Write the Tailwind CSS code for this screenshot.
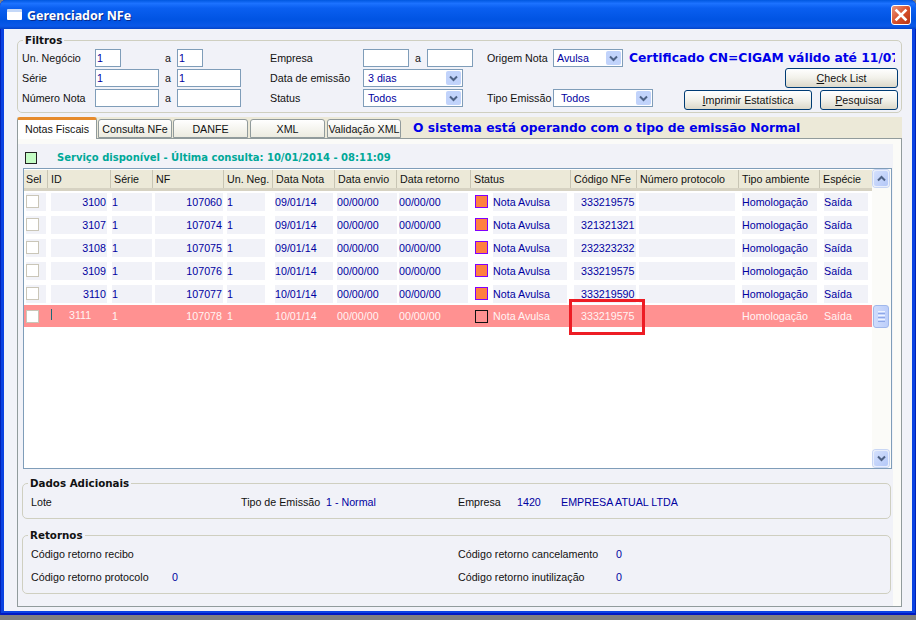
<!DOCTYPE html>
<html lang="en">
<head>
<meta charset="UTF-8">
<title>Gerenciador NFe</title>
<script src="https://cdn.jsdelivr.net/npm/@tailwindcss/browser@4"></script>
</head>
<body class="bg-[#808080] font-['Liberation_Sans',sans-serif] text-[10.7px] leading-[14px] text-[#111]">
<div class="relative h-[620px] w-[916px] overflow-hidden">
  <!-- window -->
  <div class="flex h-[615px] w-[916px] flex-col rounded-t-[6px] bg-[#0a42e2] px-[4px] pb-[4px] shadow-[inset_1px_0_0_#0022b8,inset_-1px_0_0_#0022b8,inset_0_-2px_0_#0018c4]">
    <!-- title bar -->
    <div class="-mx-[4px] flex h-[29px] shrink-0 items-center rounded-t-[6px] bg-[linear-gradient(#0058e0,#1c72ff_12%,#0a5ff0_28%,#0053e2_70%,#0a58e8_90%,#0343c8)] pl-[7px] pr-[5px]">
      <div class="h-[11px] w-[15px] rounded-[1px] border-t-[3px] border-[#c4d8f8] bg-white"></div>
      <span class="ml-[5px] pt-[2px] font-['Noto_Sans',sans-serif] text-[12.5px] font-bold text-white [text-shadow:1px_1px_0_#0a2a8a]">Gerenciador NFe</span>
      <div class="ml-auto flex h-[20px] w-[20px] items-center justify-center rounded-[3px] border border-white bg-gradient-to-br from-[#e8957c] via-[#d8512c] to-[#b93412]">
        <svg width="14" height="14" viewBox="0 0 14 14"><path d="M2.5 2.5L11.5 11.5M11.5 2.5L2.5 11.5" stroke="#fff" stroke-width="2.6" stroke-linecap="square"/></svg>
      </div>
    </div>
    <!-- client area -->
    <div class="flex min-h-0 flex-1 flex-col bg-[#f1f2f8] pl-[13px] pr-[10px] pt-[4px]">
      <!-- Filtros -->
      <fieldset class="h-[80px] shrink-0 rounded-[5px] border border-[#cfcfc0]">
        <legend class="ml-[5px] px-[2px] font-['DejaVu_Sans',sans-serif] text-[10.3px] font-bold leading-[14px]">Filtros</legend>
        <div class="grid grid-cols-[73px_64px_18px_64px_29px_93px_110px_14px_66px_1fr] grid-rows-[18px_18px_18px] items-center gap-y-[2px] whitespace-nowrap pl-[4px] pr-[3px] pt-[2px]">
          <span>Un. Negócio</span>
          <input value="1" class="h-[18px] w-[26px] border border-[#7f9db9] bg-white px-[1px] text-[#0000a0] outline-none">
          <span class="pl-[6px]">a</span>
          <input value="1" class="h-[18px] w-[26px] border border-[#7f9db9] bg-white px-[1px] text-[#0000a0] outline-none">
          <span></span>
          <span>Empresa</span>
          <div class="flex items-center">
            <input class="h-[18px] w-[46px] border border-[#7f9db9] bg-white outline-none">
            <span class="w-[18px] pl-[6px]">a</span>
            <input class="h-[18px] w-[46px] border border-[#7f9db9] bg-white outline-none">
          </div>
          <span></span>
          <span>Origem Nota</span>
          <div class="flex items-center">
            <div class="flex h-[18px] w-[70px] items-center justify-between border border-[#7f9db9] bg-white pl-[3px] pr-[1px] text-[#0000a0]">Avulsa
              <span class="flex h-[14px] w-[15px] items-center justify-center rounded-[2px] bg-[#c1d3fb]"><svg width="9" height="7" viewBox="0 0 9 7"><path d="M1 1.5L4.5 5L8 1.5" fill="none" stroke="#4d6185" stroke-width="2"/></svg></span>
            </div>
            <span class="ml-[6px] w-[266px] overflow-hidden font-['DejaVu_Sans',sans-serif] text-[12.3px] font-bold text-[#0000e8]">Certificado CN=CIGAM válido até 11/07</span>
          </div>

          <span>Série</span>
          <input value="1" class="h-[18px] w-[64px] border border-[#7f9db9] bg-white px-[1px] text-[#0000a0] outline-none">
          <span class="pl-[6px]">a</span>
          <input value="1" class="h-[18px] w-[64px] border border-[#7f9db9] bg-white px-[1px] text-[#0000a0] outline-none">
          <span></span>
          <span>Data de emissão</span>
          <div class="flex h-[18px] w-[100px] items-center justify-between border border-[#7f9db9] bg-white pl-[4px] pr-[1px] text-[#0000a0]">3 dias
            <span class="flex h-[14px] w-[15px] items-center justify-center rounded-[2px] bg-[#c1d3fb]"><svg width="9" height="7" viewBox="0 0 9 7"><path d="M1 1.5L4.5 5L8 1.5" fill="none" stroke="#4d6185" stroke-width="2"/></svg></span>
          </div>
          <span></span>
          <span></span>
          <div class="flex h-[18px] items-start justify-end">
            <button class="-mt-[1px] h-[20px] w-[113px] rounded-[3px] border border-[#003c74] bg-gradient-to-b from-white via-[#f2f1ea] to-[#dcd8ca]"><u>C</u>heck List</button>
          </div>

          <span>Número Nota</span>
          <input class="h-[18px] w-[64px] border border-[#7f9db9] bg-white outline-none">
          <span class="pl-[6px]">a</span>
          <input class="h-[18px] w-[64px] border border-[#7f9db9] bg-white outline-none">
          <span></span>
          <span>Status</span>
          <div class="flex h-[18px] w-[100px] items-center justify-between border border-[#7f9db9] bg-white pl-[4px] pr-[1px] text-[#0000a0]">Todos
            <span class="flex h-[14px] w-[15px] items-center justify-center rounded-[2px] bg-[#c1d3fb]"><svg width="9" height="7" viewBox="0 0 9 7"><path d="M1 1.5L4.5 5L8 1.5" fill="none" stroke="#4d6185" stroke-width="2"/></svg></span>
          </div>
          <span></span>
          <span>Tipo Emissão</span>
          <div class="flex h-[18px] items-start">
            <div class="flex h-[18px] w-[100px] items-center justify-between border border-[#7f9db9] bg-white pl-[7px] pr-[1px] text-[#0000a0]">Todos
              <span class="flex h-[14px] w-[15px] items-center justify-center rounded-[2px] bg-[#c1d3fb]"><svg width="9" height="7" viewBox="0 0 9 7"><path d="M1 1.5L4.5 5L8 1.5" fill="none" stroke="#4d6185" stroke-width="2"/></svg></span>
            </div>
            <button class="ml-[31px] mt-[1px] h-[20px] w-[128px] rounded-[3px] border border-[#003c74] bg-gradient-to-b from-white via-[#f2f1ea] to-[#dcd8ca]"><u>I</u>mprimir Estatística</button>
            <button class="ml-[8px] mt-[1px] h-[20px] w-[78px] rounded-[3px] border border-[#003c74] bg-gradient-to-b from-white via-[#f2f1ea] to-[#dcd8ca]"><u>P</u>esquisar</button>
          </div>
        </div>
      </fieldset>

      <!-- tabs -->
      <div class="mt-[4px] flex h-[21px] w-[885px] shrink-0 items-end gap-[1px] whitespace-nowrap bg-[#ece9d8]">
        <div class="z-10 -mb-[1px] flex h-[22px] w-[80px] items-center justify-center rounded-t-[3px] border-x border-t-[3px] border-x-[#919b9c] border-t-[#e68b2c] bg-white pb-[2px]">Notas Fiscais</div>
        <div class="flex h-[19px] w-[74px] items-center justify-center rounded-t-[3px] border border-[#919b9c] bg-gradient-to-b from-white to-[#ecebe0]">Consulta NFe</div>
        <div class="flex h-[19px] w-[75px] items-center justify-center rounded-t-[3px] border border-[#919b9c] bg-gradient-to-b from-white to-[#ecebe0]">DANFE</div>
        <div class="ml-[1px] flex h-[19px] w-[75px] items-center justify-center rounded-t-[3px] border border-[#919b9c] bg-gradient-to-b from-white to-[#ecebe0]">XML</div>
        <div class="ml-[1px] flex h-[19px] w-[74px] items-center justify-center rounded-t-[3px] border border-[#919b9c] bg-gradient-to-b from-white to-[#ecebe0]">Validação XML</div>
        <span class="ml-[11px] self-center font-['DejaVu_Sans',sans-serif] text-[12.3px] font-bold text-[#0000e8]">O sistema está operando com o tipo de emissão Normal</span>
      </div>

      <!-- tab panel -->
      <div class="flex h-[469px] w-[885px] shrink-0 flex-col border border-[#919b9c] bg-[#fbfbf8] pr-[8px] pt-[5px]">
        <div class="flex min-h-0 flex-1 flex-col bg-[#f1f2f8]">
          <div class="flex h-[24px] shrink-0 items-start pl-[7px] pt-[8px]">
            <div class="h-[12px] w-[12px] border border-[#222] bg-[#c4fcc4]"></div>
            <span class="ml-[20px] font-['DejaVu_Sans',sans-serif] text-[10px] font-bold leading-[12px] text-[#00a898]">Serviço disponível - Última consulta: 10/01/2014 - 08:11:09</span>
          </div>

          <!-- grid -->
          <div class="ml-[5px] flex h-[301px] w-[869px] shrink-0 border border-[#7f9db9] bg-white">
            <div class="w-[848px] shrink-0 pt-[1px]">
              <div class="flex h-[21px] whitespace-nowrap border-b-[3px] border-[#d6d2c2] bg-[#ece9d8]">
                <div class="w-[24px] border-r border-[#c8c5b4] pl-[2px] pt-[2px]">Sel</div>
                <div class="w-[63px] border-r border-[#c8c5b4] pl-[3px] pt-[2px]">ID</div>
                <div class="w-[42px] border-r border-[#c8c5b4] pl-[3px] pt-[2px]">Série</div>
                <div class="w-[71px] border-r border-[#c8c5b4] pl-[3px] pt-[2px]">NF</div>
                <div class="w-[49px] border-r border-[#c8c5b4] pl-[3px] pt-[2px]">Un. Neg.</div>
                <div class="w-[62px] border-r border-[#c8c5b4] pl-[3px] pt-[2px]">Data Nota</div>
                <div class="w-[62px] border-r border-[#c8c5b4] pl-[3px] pt-[2px]">Data envio</div>
                <div class="w-[74px] border-r border-[#c8c5b4] pl-[3px] pt-[2px]">Data retorno</div>
                <div class="w-[100px] border-r border-[#c8c5b4] pl-[3px] pt-[2px]">Status</div>
                <div class="w-[66px] border-r border-[#c8c5b4] pl-[3px] pt-[2px]">Código NFe</div>
                <div class="w-[102px] border-r border-[#c8c5b4] pl-[3px] pt-[2px]">Número protocolo</div>
                <div class="w-[81px] border-r border-[#c8c5b4] pl-[3px] pt-[2px]">Tipo ambiente</div>
                <div class="w-[51px] pl-[3px] pt-[2px]">Espécie</div>
              </div>

              <div class="pt-[2px] text-[#0000a0]">
                <div class="mb-[5px] flex h-[18px] leading-[18px]">
                  <div class="ml-[2px] h-[18px] w-[20px] bg-[#f1f2f8]"><div class="mt-[2px] h-[13px] w-[13px] border border-[#cac6b8] bg-white"></div></div>
                  <div class="ml-[5px] w-[56px] bg-[#f1f2f8] pr-[1px] text-right">3100</div>
                  <div class="ml-[5px] w-[40px] bg-[#f1f2f8]">1</div>
                  <div class="ml-[3px] w-[68px] bg-[#f1f2f8] pr-[1px] text-right">107060</div>
                  <div class="ml-[4px] w-[38px] bg-[#f1f2f8]">1</div>
                  <div class="ml-[10px] w-[58px] bg-[#f1f2f8]">09/01/14</div>
                  <div class="ml-[4px] w-[60px] bg-[#f1f2f8]">00/00/00</div>
                  <div class="ml-[2px] w-[69px] bg-[#f1f2f8]">00/00/00</div>
                  <div class="ml-[7px] mt-[2px] h-[13px] w-[13px] border border-[#8000ff] bg-[#ff8040]"></div>
                  <div class="ml-[5px] w-[74px] bg-[#f1f2f8]">Nota Avulsa</div>
                  <div class="ml-[7px] w-[62px] bg-[#f1f2f8] pl-[7px]">333219575</div>
                  <div class="ml-[3px] w-[96px] bg-[#f1f2f8]"></div>
                  <div class="ml-[7px] w-[75px] bg-[#f1f2f8]">Homologação</div>
                  <div class="ml-[7px] w-[44px] bg-[#f1f2f8]">Saída</div>
                </div>
                <div class="mb-[5px] flex h-[18px] leading-[18px]">
                  <div class="ml-[2px] h-[18px] w-[20px] bg-[#f1f2f8]"><div class="mt-[2px] h-[13px] w-[13px] border border-[#cac6b8] bg-white"></div></div>
                  <div class="ml-[5px] w-[56px] bg-[#f1f2f8] pr-[1px] text-right">3107</div>
                  <div class="ml-[5px] w-[40px] bg-[#f1f2f8]">1</div>
                  <div class="ml-[3px] w-[68px] bg-[#f1f2f8] pr-[1px] text-right">107074</div>
                  <div class="ml-[4px] w-[38px] bg-[#f1f2f8]">1</div>
                  <div class="ml-[10px] w-[58px] bg-[#f1f2f8]">09/01/14</div>
                  <div class="ml-[4px] w-[60px] bg-[#f1f2f8]">00/00/00</div>
                  <div class="ml-[2px] w-[69px] bg-[#f1f2f8]">00/00/00</div>
                  <div class="ml-[7px] mt-[2px] h-[13px] w-[13px] border border-[#8000ff] bg-[#ff8040]"></div>
                  <div class="ml-[5px] w-[74px] bg-[#f1f2f8]">Nota Avulsa</div>
                  <div class="ml-[7px] w-[62px] bg-[#f1f2f8] pl-[7px]">321321321</div>
                  <div class="ml-[3px] w-[96px] bg-[#f1f2f8]"></div>
                  <div class="ml-[7px] w-[75px] bg-[#f1f2f8]">Homologação</div>
                  <div class="ml-[7px] w-[44px] bg-[#f1f2f8]">Saída</div>
                </div>
                <div class="mb-[5px] flex h-[18px] leading-[18px]">
                  <div class="ml-[2px] h-[18px] w-[20px] bg-[#f1f2f8]"><div class="mt-[2px] h-[13px] w-[13px] border border-[#cac6b8] bg-white"></div></div>
                  <div class="ml-[5px] w-[56px] bg-[#f1f2f8] pr-[1px] text-right">3108</div>
                  <div class="ml-[5px] w-[40px] bg-[#f1f2f8]">1</div>
                  <div class="ml-[3px] w-[68px] bg-[#f1f2f8] pr-[1px] text-right">107075</div>
                  <div class="ml-[4px] w-[38px] bg-[#f1f2f8]">1</div>
                  <div class="ml-[10px] w-[58px] bg-[#f1f2f8]">09/01/14</div>
                  <div class="ml-[4px] w-[60px] bg-[#f1f2f8]">00/00/00</div>
                  <div class="ml-[2px] w-[69px] bg-[#f1f2f8]">00/00/00</div>
                  <div class="ml-[7px] mt-[2px] h-[13px] w-[13px] border border-[#8000ff] bg-[#ff8040]"></div>
                  <div class="ml-[5px] w-[74px] bg-[#f1f2f8]">Nota Avulsa</div>
                  <div class="ml-[7px] w-[62px] bg-[#f1f2f8] pl-[7px]">232323232</div>
                  <div class="ml-[3px] w-[96px] bg-[#f1f2f8]"></div>
                  <div class="ml-[7px] w-[75px] bg-[#f1f2f8]">Homologação</div>
                  <div class="ml-[7px] w-[44px] bg-[#f1f2f8]">Saída</div>
                </div>
                <div class="mb-[5px] flex h-[18px] leading-[18px]">
                  <div class="ml-[2px] h-[18px] w-[20px] bg-[#f1f2f8]"><div class="mt-[2px] h-[13px] w-[13px] border border-[#cac6b8] bg-white"></div></div>
                  <div class="ml-[5px] w-[56px] bg-[#f1f2f8] pr-[1px] text-right">3109</div>
                  <div class="ml-[5px] w-[40px] bg-[#f1f2f8]">1</div>
                  <div class="ml-[3px] w-[68px] bg-[#f1f2f8] pr-[1px] text-right">107076</div>
                  <div class="ml-[4px] w-[38px] bg-[#f1f2f8]">1</div>
                  <div class="ml-[10px] w-[58px] bg-[#f1f2f8]">10/01/14</div>
                  <div class="ml-[4px] w-[60px] bg-[#f1f2f8]">00/00/00</div>
                  <div class="ml-[2px] w-[69px] bg-[#f1f2f8]">00/00/00</div>
                  <div class="ml-[7px] mt-[2px] h-[13px] w-[13px] border border-[#8000ff] bg-[#ff8040]"></div>
                  <div class="ml-[5px] w-[74px] bg-[#f1f2f8]">Nota Avulsa</div>
                  <div class="ml-[7px] w-[62px] bg-[#f1f2f8] pl-[7px]">333219575</div>
                  <div class="ml-[3px] w-[96px] bg-[#f1f2f8]"></div>
                  <div class="ml-[7px] w-[75px] bg-[#f1f2f8]">Homologação</div>
                  <div class="ml-[7px] w-[44px] bg-[#f1f2f8]">Saída</div>
                </div>
                <div class="mb-[2px] flex h-[18px] leading-[18px]">
                  <div class="ml-[2px] h-[18px] w-[20px] bg-[#f1f2f8]"><div class="mt-[2px] h-[13px] w-[13px] border border-[#cac6b8] bg-white"></div></div>
                  <div class="ml-[5px] w-[56px] bg-[#f1f2f8] pr-[1px] text-right">3110</div>
                  <div class="ml-[5px] w-[40px] bg-[#f1f2f8]">1</div>
                  <div class="ml-[3px] w-[68px] bg-[#f1f2f8] pr-[1px] text-right">107077</div>
                  <div class="ml-[4px] w-[38px] bg-[#f1f2f8]">1</div>
                  <div class="ml-[10px] w-[58px] bg-[#f1f2f8]">10/01/14</div>
                  <div class="ml-[4px] w-[60px] bg-[#f1f2f8]">00/00/00</div>
                  <div class="ml-[2px] w-[69px] bg-[#f1f2f8]">00/00/00</div>
                  <div class="ml-[7px] mt-[2px] h-[13px] w-[13px] border border-[#8000ff] bg-[#ff8040]"></div>
                  <div class="ml-[5px] w-[74px] bg-[#f1f2f8]">Nota Avulsa</div>
                  <div class="ml-[7px] w-[62px] bg-[#f1f2f8] pl-[7px]">333219590</div>
                  <div class="ml-[3px] w-[96px] bg-[#f1f2f8]"></div>
                  <div class="ml-[7px] w-[75px] bg-[#f1f2f8]">Homologação</div>
                  <div class="ml-[7px] w-[44px] bg-[#f1f2f8]">Saída</div>
                </div>
                <!-- selected row -->
                <div class="flex h-[22px] bg-[#ff9191] leading-[23px] text-[#fff4f4]">
                  <div class="ml-[2px] w-[20px]"><div class="mt-[5px] h-[13px] w-[13px] border border-[#cac6b8] bg-white"></div></div>
                  <div class="ml-[5px] mt-[4px] h-[11px] w-[1px] bg-[#1d6a78]"></div>
                  <div class="ml-[17px] w-[38px] leading-[20px]">3111</div>
                  <div class="ml-[5px] w-[40px]">1</div>
                  <div class="ml-[3px] w-[68px] pr-[1px] text-right">107078</div>
                  <div class="ml-[4px] w-[38px]">1</div>
                  <div class="ml-[10px] w-[58px]">10/01/14</div>
                  <div class="ml-[4px] w-[60px]">00/00/00</div>
                  <div class="ml-[2px] w-[69px]">00/00/00</div>
                  <div class="ml-[7px] mt-[5px] h-[13px] w-[13px] border border-[#111]"></div>
                  <div class="ml-[5px] w-[74px]">Nota Avulsa</div>
                  <div class="ml-[7px] w-[62px] pl-[7px]">333219575</div>
                  <div class="ml-[3px] w-[96px]"></div>
                  <div class="ml-[7px] w-[75px]">Homologação</div>
                  <div class="ml-[7px] w-[44px]">Saída</div>
                </div>
              </div>
            </div>
            <!-- scrollbar -->
            <div class="flex w-[19px] shrink-0 flex-col bg-[#fbfbf8] pl-[1px] pr-[2px] pt-[1px]">
              <div class="flex h-[17px] items-center justify-center rounded-[3px] border border-[#e8eefc] bg-gradient-to-br from-[#d4e0fc] to-[#b4c8f8] shadow-[0_0_0_1px_#c8d6f4]"><svg width="9" height="7" viewBox="0 0 9 7"><path d="M1 5.5L4.5 2L8 5.5" fill="none" stroke="#4d6185" stroke-width="2"/></svg></div>
              <div class="mt-[118px] flex h-[23px] flex-col items-center justify-center gap-[1px] rounded-[3px] border border-[#a0b8ec] bg-gradient-to-r from-[#cfdcfc] to-[#bccefa]">
                <div class="h-px w-[7px] bg-[#eef3ff]"></div><div class="h-px w-[7px] bg-[#8fa8e8]"></div><div class="h-px w-[7px] bg-[#eef3ff]"></div><div class="h-px w-[7px] bg-[#8fa8e8]"></div><div class="h-px w-[7px] bg-[#eef3ff]"></div><div class="h-px w-[7px] bg-[#8fa8e8]"></div>
              </div>
              <div class="mb-[1px] mt-auto flex h-[17px] items-center justify-center rounded-[3px] border border-[#e8eefc] bg-gradient-to-br from-[#d4e0fc] to-[#b4c8f8] shadow-[0_0_0_1px_#c8d6f4]"><svg width="9" height="7" viewBox="0 0 9 7"><path d="M1 1.5L4.5 5L8 1.5" fill="none" stroke="#4d6185" stroke-width="2"/></svg></div>
            </div>
          </div>

          <!-- Dados Adicionais -->
          <fieldset class="ml-[4px] mt-[7px] h-[43px] w-[869px] shrink-0 rounded-[5px] border border-[#cfcfc0]">
            <legend class="ml-[5px] px-[2px] font-['DejaVu_Sans',sans-serif] text-[10.3px] font-bold leading-[14px]">Dados Adicionais</legend>
            <div class="flex h-[24px] items-center pl-[8px]">
              <span class="w-[210px]">Lote</span>
              <span class="w-[85px]">Tipo de Emissão</span>
              <span class="w-[132px] text-[#0000a0]">1 - Normal</span>
              <span class="w-[59px]">Empresa</span>
              <span class="w-[44px] text-[#0000a0]">1420</span>
              <span class="text-[#0000a0]">EMPRESA ATUAL LTDA</span>
            </div>
          </fieldset>

          <!-- Retornos -->
          <fieldset class="ml-[4px] mt-[9px] h-[66px] w-[869px] shrink-0 rounded-[5px] border border-[#cfcfc0]">
            <legend class="ml-[5px] px-[2px] font-['DejaVu_Sans',sans-serif] text-[10.3px] font-bold leading-[14px]">Retornos</legend>
            <div class="grid grid-cols-[141px_286px_158px_1fr] grid-rows-[23px_23px] items-center pl-[8px]">
              <span>Código retorno recibo</span>
              <span class="text-[#0000a0]"></span>
              <span>Código retorno cancelamento</span>
              <span class="text-[#0000a0]">0</span>
              <span>Código retorno protocolo</span>
              <span class="text-[#0000a0]">0</span>
              <span>Código retorno inutilização</span>
              <span class="text-[#0000a0]">0</span>
            </div>
          </fieldset>
        </div>
      </div>
    </div>
  </div>
  <!-- annotation drawn over the screenshot -->
  <div class="absolute left-[569px] top-[299px] h-[36px] w-[76px] border-[3px] border-[#ed1c24]"></div>
</div>
</body>
</html>
